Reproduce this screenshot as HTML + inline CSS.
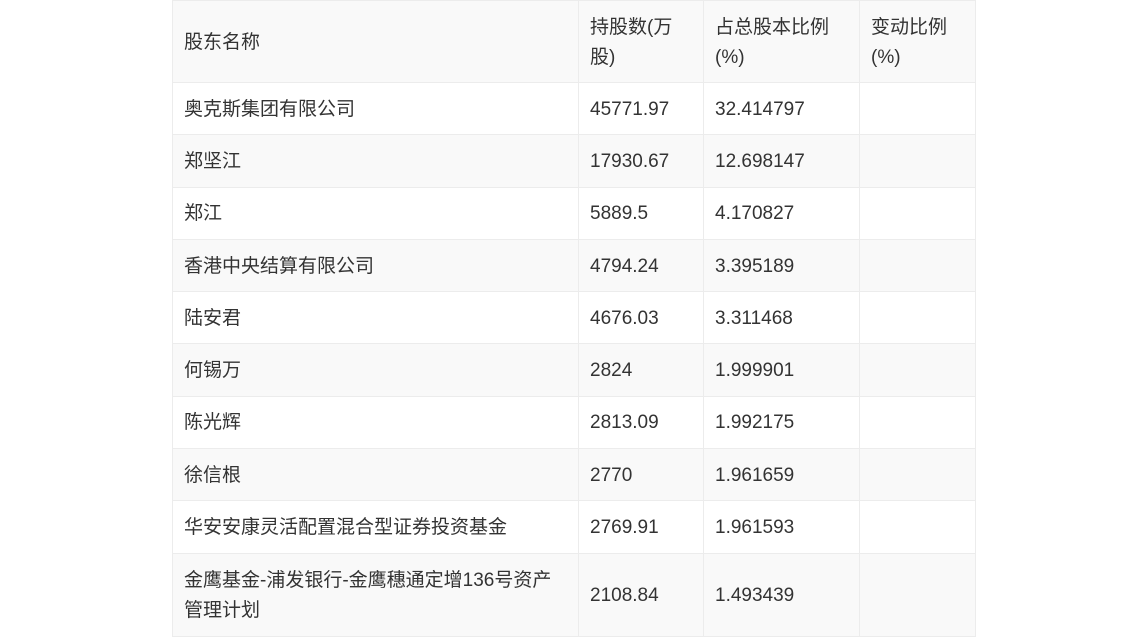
<!DOCTYPE html>
<html><head><meta charset="utf-8"><style>
html,body{margin:0;padding:0;background:#fff;width:1148px;height:635px;overflow:hidden}
table{position:absolute;left:172px;top:0;border-collapse:collapse;width:803px;font-family:"Liberation Sans","Noto Sans CJK SC",sans-serif;font-size:19px;color:#333;table-layout:fixed}
td{border:1px solid #ececec;padding:2px 11px 0 11px;vertical-align:middle;line-height:30px;height:49.3px;white-space:nowrap;overflow:hidden}
tr:first-child{background:#f9f9f9}
tr:first-child td{height:79px}
tr.last td{height:80px}
</style></head><body>
<table>
<colgroup><col style="width:406px"><col style="width:125px"><col style="width:156px"><col style="width:116px"></colgroup>
<tr><td>股东名称</td><td>持股数(万<br>股)</td><td>占总股本比例<br>(%)</td><td>变动比例<br>(%)</td></tr>
<tr style="background:#fff"><td>奥克斯集团有限公司</td><td>45771.97</td><td>32.414797</td><td></td></tr>
<tr style="background:#f9f9f9"><td>郑坚江</td><td>17930.67</td><td>12.698147</td><td></td></tr>
<tr style="background:#fff"><td>郑江</td><td>5889.5</td><td>4.170827</td><td></td></tr>
<tr style="background:#f9f9f9"><td>香港中央结算有限公司</td><td>4794.24</td><td>3.395189</td><td></td></tr>
<tr style="background:#fff"><td>陆安君</td><td>4676.03</td><td>3.311468</td><td></td></tr>
<tr style="background:#f9f9f9"><td>何锡万</td><td>2824</td><td>1.999901</td><td></td></tr>
<tr style="background:#fff"><td>陈光辉</td><td>2813.09</td><td>1.992175</td><td></td></tr>
<tr style="background:#f9f9f9"><td>徐信根</td><td>2770</td><td>1.961659</td><td></td></tr>
<tr style="background:#fff"><td>华安安康灵活配置混合型证券投资基金</td><td>2769.91</td><td>1.961593</td><td></td></tr>
<tr class="last" style="background:#f9f9f9"><td>金鹰基金-浦发银行-金鹰穗通定增136号资产<br>管理计划</td><td>2108.84</td><td>1.493439</td><td></td></tr>
</table>
</body></html>
